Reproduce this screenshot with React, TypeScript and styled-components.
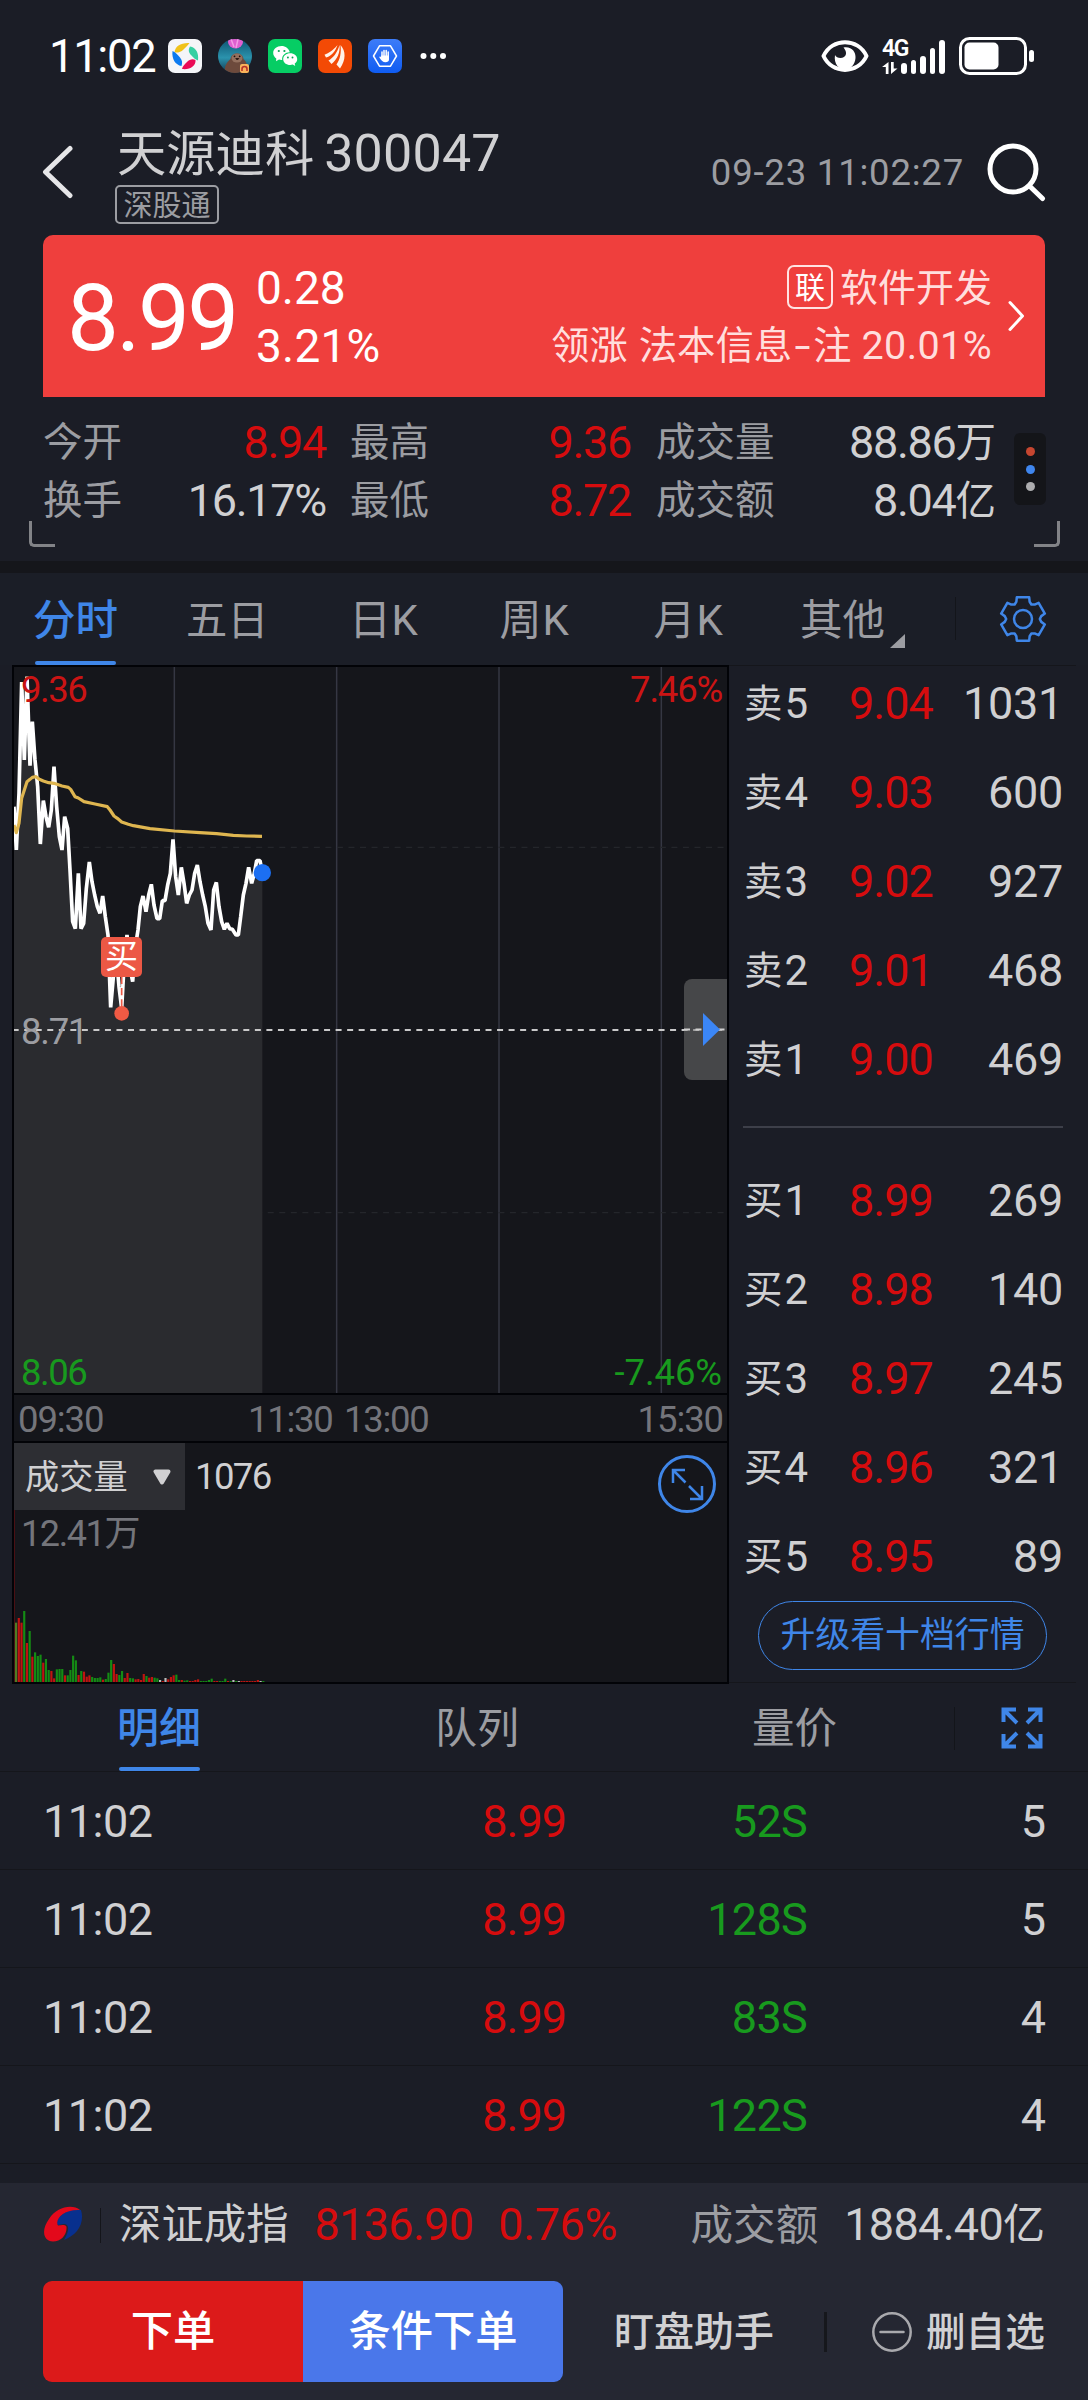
import React from "react";
import styled, { createGlobalStyle, css } from "styled-components";

const c = {
  page: "#1b1d26",
  tabs: "#1b1e27",
  ink: "#d0d0d2",
  gray: "#9c9da2",
  dim: "#74757b",
  red: "#d60c0e",
  green: "#189a1e",
  blue: "#3f86e8",
  line: "#15161b",
  plot: "#15161b",
  black: "#020307",
  bar: "#252732",
};

const Global = createGlobalStyle`
  *, *::before, *::after { box-sizing: border-box; }
  html, body { margin: 0; padding: 0; background: ${c.page}; }
  body { font-family: Roboto, "Noto Sans CJK SC", sans-serif; color: ${c.ink}; }
  svg { display: block; flex: none; }
`;

const Screen = styled.div`
  width: 1088px;
  height: 2400px;
  overflow: hidden;
  display: flex;
  flex-direction: column;
  background: ${c.page};
`;

interface TextProps {
  $size: number;
  $color?: string;
  $track?: number;
  $weight?: number;
}
const Text = styled.span<TextProps>`
  font-size: ${(p) => p.$size}px;
  line-height: 50px;
  white-space: pre;
  color: ${(p) => p.$color ?? c.ink};
  letter-spacing: ${(p) => p.$track ?? 0}px;
  font-weight: ${(p) => p.$weight ?? 400};
`;

/* ---------- status bar ---------- */
const StatusBar = styled.div`
  height: 112px;
  padding: 0 54px 0 49px;
  display: flex;
  align-items: center;
  justify-content: space-between;
`;
const StatusLeft = styled.div`
  display: flex;
  align-items: center;
  gap: 16px;
`;
const Clock = styled(Text)`
  width: 103px;
  padding-top: 2px;
  color: #fff;
`;
const StatusRight = styled.div`
  display: flex;
  align-items: center;
  gap: 13px;
`;

const AppIcons = () => (
  <>
    <svg width="34" height="34" viewBox="0 0 34 34">
      <rect width="34" height="34" rx="7" fill="#f4f5f8" />
      <path d="M6.500 13.500C7 7 13 3.500 21.500 4C19.500 7 17 9 15.500 10.500C13 13 10.500 13.800 6.500 13.500Z" fill="#f0c21a" />
      <path d="M22 7.500C28 8.500 31 14 30 21.500C27 20.500 25.500 18.500 23.500 16.500C20.500 13.500 20 11 22 7.500Z" fill="#36cfa2" />
      <path d="M27.500 21C28 27 22 31 14 30C14.500 27 17 25 19 23C21.500 20.500 24.500 19.500 27.500 21Z" fill="#ea0a56" />
      <path d="M4.500 12C8 13.500 10 16 12 18.500C14.500 21.500 14.500 24 13.500 27C7.500 26 3.500 20 4.500 12Z" fill="#0b7af0" />
    </svg>
    <svg width="34" height="34" viewBox="0 0 34 34">
      <defs>
        <linearGradient id="sea" x1="0" y1="0" x2="0" y2="1">
          <stop offset="0" stopColor="#0d5270" />
          <stop offset=".55" stopColor="#2b93ad" />
          <stop offset="1" stopColor="#123850" />
        </linearGradient>
        <clipPath id="round"><circle cx="17" cy="17" r="17" /></clipPath>
      </defs>
      <g clipPath="url(#round)">
        <rect width="34" height="34" fill="url(#sea)" />
        <ellipse cx="17.500" cy="3" rx="7.500" ry="6.500" fill="#df5fd0" />
        <path d="M13 0L16 8M20 0L18 9" stroke="#f39be6" strokeWidth="1.500" />
        <path d="M7 34C6 27 9 23 12.500 20C13 12.500 25 12.500 25.500 20C29 23 30 28 29 34Z" fill="#6d4a3c" />
        <ellipse cx="19" cy="19" rx="5.500" ry="4.500" fill="#93705e" />
        <path d="M17.800 19.500H20.800L19.300 21Z" fill="#2c1b16" stroke="#2c1b16" />
        <circle cx="16.500" cy="17.300" r=".9" fill="#1c110e" />
        <circle cx="21.700" cy="17.300" r=".9" fill="#1c110e" />
      </g>
      <rect x="22" y="25" width="9" height="9" rx="2" fill="#f9b35a" />
      <path d="M24 32V30A2.500 2.500 0 0 1 29 30V32" fill="none" stroke="#b8322a" strokeWidth="1.600" />
    </svg>
    <svg width="34" height="34" viewBox="0 0 34 34">
      <rect width="34" height="34" rx="7" fill="#06cd64" />
      <path d="M13.500 7C8.800 7 5.200 10 5.200 14C5.200 16.300 6.500 18.200 8.300 19.500L8 22.300L11 20.600C12 20.900 13.300 21 14.200 20.900C13.700 16.500 17.500 13.200 21.800 13.300C21 9.500 17.500 7 13.500 7Z" fill="#fff" />
      <path d="M22.200 14.300C18.300 14.300 15.200 16.900 15.200 20.200C15.200 23.500 18.300 26 22.200 26C23.100 26 24 25.900 24.800 25.600L27.200 27L26.700 24.600C28.200 23.500 29.200 22 29.200 20.200C29.200 16.900 26.100 14.300 22.200 14.300Z" fill="#fff" />
      <g fill="#06a552">
        <circle cx="10.800" cy="12" r="1.100" /><circle cx="16.400" cy="12" r="1.100" />
        <circle cx="19.900" cy="18.500" r=".95" /><circle cx="24.500" cy="18.500" r=".95" />
      </g>
    </svg>
    <svg width="34" height="34" viewBox="0 0 34 34">
      <rect width="34" height="34" rx="7" fill="#f34a05" />
      <g fill="#fff3ea">
        <path d="M6.500 15.800C11 14 15 11.500 19.500 6C17.500 12.500 13 17.500 8 18.500Z" />
        <path d="M10.500 21.500C15 19 19.500 13.500 21.500 6C22.500 13 19 21 13.500 25Z" />
        <path d="M18.500 25.500C22 20.500 23.500 14 22.500 6C28 12 28 21 22 29.500Z" />
      </g>
    </svg>
    <svg width="34" height="34" viewBox="0 0 34 34">
      <defs>
        <linearGradient id="guard" x1="0" y1="0" x2="0" y2="1">
          <stop offset="0" stopColor="#3d7cf8" /><stop offset="1" stopColor="#0f5cf2" />
        </linearGradient>
      </defs>
      <rect width="34" height="34" rx="7" fill="url(#guard)" />
      <path d="M11.500 6.800H22.500L28.500 17L22.500 27.200H11.500L5.500 17Z" fill="none" stroke="#fff" strokeWidth="1.500" strokeLinejoin="round" />
      <path d="M14 18V13M16 17V11.500M18.200 17V11.500M20.200 18V13" stroke="#fff" strokeWidth="1.500" strokeLinecap="round" />
      <path d="M13.200 16.500H21V20.500C21 22.300 19.500 23.300 17.500 23.300C15 23.300 13.200 21.500 11.400 18.500C11.200 17.300 12.600 17.300 13.200 18.200Z" fill="#fff" />
    </svg>
    <svg width="30" height="34" viewBox="0 0 30 34" fill="#fff">
      <circle cx="5.500" cy="17" r="3" /><circle cx="15.300" cy="17" r="3" /><circle cx="25" cy="17" r="3" />
    </svg>
  </>
);

const Network = styled.div`
  display: grid;
  grid-template-columns: 19px 45px;
  height: 36px;
  align-items: end;
`;
const NetworkLeft = styled.div`
  display: flex;
  flex-direction: column;
  gap: 4px;
`;
const NetworkType = styled.span`
  font-size: 23px;
  line-height: 19px;
  font-weight: 600;
  letter-spacing: -1.500px;
  color: #fff;
  white-space: nowrap;
`;
const Bars = styled.div`
  display: flex;
  align-items: flex-end;
  gap: 4px;
`;
const SignalBar = styled.i<{ $h: number }>`
  width: 5.500px;
  height: ${(p) => p.$h}px;
  border-radius: 3px;
  background: #fff;
`;

const StatusIcons = () => (
  <StatusRight>
    <svg width="48" height="34" viewBox="0 0 48 34">
      <path d="M2.500 17C11 -1.500 37 -1.500 45.500 17C37 35.500 11 35.500 2.500 17Z" fill="none" stroke="#fff" strokeWidth="4" strokeLinejoin="round" />
      <path d="M22.500 8.500C30.500 7 35 13 34.500 19C34 26 29 30.500 24 30.500C18 30.500 12.500 25 14 16C15.500 20 24 20.500 25 15C25.300 12 24 10.500 22.500 8.500Z" fill="#fff" />
    </svg>
    <Network>
      <NetworkLeft>
        <NetworkType>4G</NetworkType>
        <svg width="16" height="12" viewBox="0 0 16 12" fill="#fff">
          <path d="M6.500 0V12H3.800V5H0Z" /><path d="M9 12V0H11.700V6.500H15.500Z" />
        </svg>
      </NetworkLeft>
      <Bars>
        {[11, 14, 18, 26, 34].map((h) => <SignalBar key={h} $h={h} />)}
      </Bars>
    </Network>
    <svg width="75" height="38" viewBox="0 0 75 38">
      <rect x="1.500" y="1.500" width="65" height="35" rx="9" fill="none" stroke="#fff" strokeWidth="3" />
      <rect x="5.500" y="5.500" width="34" height="27" rx="5" fill="#fff" />
      <rect x="70" y="13" width="5" height="12" rx="2.500" fill="#fff" />
    </svg>
  </StatusRight>
);

/* ---------- stock header ---------- */
const Header = styled.header`
  height: 123px;
  padding: 0 42px 0 42px;
  display: flex;
  align-items: flex-start;
`;
const BackIcon = styled.svg`
  margin: 33px 41px 0 0;
`;
const Names = styled.div`
  flex: 1;
  padding: 17px 0 0 0;
  display: flex;
  flex-direction: column;
  align-items: flex-start;
  line-height: 0;
`;
const NameLine = styled.div`
  display: flex;
  gap: 10px;
  padding-left: 2px;
`;
const Tag = styled.span`
  margin-top: 6px;
  width: 104px;
  height: 39px;
  border: 2px solid ${c.gray};
  border-radius: 5px;
  display: flex;
  align-items: center;
  justify-content: center;
  font-size: 29px;
  line-height: 35px;
  padding-top: 3px;
  color: ${c.gray};
`;
const Stamp = styled(Text)`
  margin: 36px 22px 0 0;
`;
const SearchIcon = styled.svg`
  margin-top: 29px;
`;

const Quote = styled.section`
  height: 162px;
  margin: 0 43px;
  padding: 0 20px 0 24px;
  border-radius: 10px 10px 0 0;
  background: #ef3f3d;
  display: flex;
  align-items: center;
`;
const LastPrice = styled.div`
  width: 189px;
  font-size: 92.500px;
  line-height: 100px;
  letter-spacing: -2.700px;
  color: #fff;
  padding-top: 6px;
`;
const Pair = styled.div<{ $right?: boolean }>`
  display: flex;
  flex-direction: column;
  gap: 8px;
  padding-top: 2px;
  ${(p) => p.$right && css`
    flex: 1;
    align-items: flex-end;
    margin-right: 15px;
  `}
`;
const Sector = styled.div`
  display: flex;
  align-items: center;
  gap: 7px;
`;
const LinkBadge = styled.span`
  width: 46px;
  height: 44px;
  margin-top: -2px;
  border: 2px solid #ffe3e2;
  border-radius: 7px;
  text-align: center;
  font-size: 30px;
  line-height: 42px;
  color: #fff;
`;
const Mixed = styled.div`
  display: flex;
`;
const Leader = styled.div`
  display: flex;
  & > :nth-child(1) { margin-right: 11px; }
  & > :nth-child(4) { margin-right: 10px; }
`;
const Dash = styled(Text)`
  width: 21px;
  text-align: center;
  transform: scaleX(1.5);
`;

const Stats = styled.section`
  height: 164px;
  padding: 21px 29px 0;
  display: grid;
  grid-template-columns: 14px 952px 19px 32px 14px;
  grid-template-rows: 115px 27px;
`;
const StatGrid = styled.div`
  grid-column: 2;
  display: grid;
  grid-template-columns: 283px 24px 281px 25px 340px;
  grid-template-rows: 50px 50px;
  row-gap: 8px;
`;
const Stat = styled.div<{ $col: number }>`
  grid-column: ${(p) => p.$col};
  display: flex;
  justify-content: space-between;
`;
const Dots = styled.div`
  grid-column: 4;
  margin-top: 15px;
  height: 72px;
  border-radius: 6px;
  background: #141519;
  display: flex;
  flex-direction: column;
  align-items: center;
  justify-content: center;
  gap: 8.300px;
`;
const Dot = styled.i<{ $c: string }>`
  width: 9px;
  height: 9px;
  border-radius: 50%;
  background: ${(p) => p.$c};
`;
const Corner = styled.i<{ $side: "left" | "right" }>`
  grid-row: 2;
  grid-column: ${(p) => (p.$side === "left" ? "1 / 3" : "4 / 6")};
  justify-self: ${(p) => (p.$side === "left" ? "start" : "end")};
  align-self: start;
  margin-top: -12px;
  width: 26px;
  height: 26px;
  border-bottom: 3px solid #828387;
  ${(p) => (p.$side === "left" ? "border-left: 3px solid #828387; border-bottom-left-radius: 5px;" : "border-right: 3px solid #828387; border-bottom-right-radius: 5px;")}
`;
const Band = styled.div`
  height: 12px;
  background: ${c.line};
`;

interface StatItem { col: number; label: string; num: string; unit?: string; up?: boolean }
const stats: StatItem[] = [
  { col: 1, label: "今开", num: "8.94", up: true },
  { col: 3, label: "最高", num: "9.36", up: true },
  { col: 5, label: "成交量", num: "88.86", unit: "万" },
  { col: 1, label: "换手", num: "16.17%" },
  { col: 3, label: "最低", num: "8.72", up: true },
  { col: 5, label: "成交额", num: "8.04", unit: "亿" },
];

/* ---------- period tabs ---------- */
const PeriodTabs = styled.nav`
  height: 92px;
  background: ${c.tabs};
  display: flex;
  padding-left: 33px;
`;
const Period = styled.div<{ $w: number }>`
  width: ${(p) => p.$w}px;
  height: 92px;
  display: flex;
  padding-top: 23px;
`;
const Underlined = styled.div<{ $on?: boolean }>`
  display: flex;
  flex-direction: column;
  justify-content: space-between;
  align-items: center;
  height: 100%;
  &::after {
    content: "";
    width: 81px;
    height: 4px;
    border-radius: 2px;
    background: ${(p) => (p.$on ? c.blue : "transparent")};
  }
`;
const Caret = styled.i`
  align-self: flex-start;
  margin: 38px 0 0 5px;
  border-left: 15px solid transparent;
  border-bottom: 14px solid ${c.gray};
`;
const Split = styled.i<{ $top: number }>`
  width: 1px;
  height: 43px;
  margin-top: ${(p) => p.$top}px;
  background: #13151a;
`;
const GearIcon = styled.svg`
  margin: 22px 0 0 43px;
`;

const gearPath = (() => {
  const pts: string[] = [];
  const at = (deg: number, r: number) => {
    const a = (deg * Math.PI) / 180;
    return `${(24 + r * Math.sin(a)).toFixed(2)} ${(24 - r * Math.cos(a)).toFixed(2)}`;
  };
  for (let k = 0; k < 6; k++) {
    const b = k * 60;
    pts.push(at(b - 16, 22.5), at(b + 16, 22.5), at(b + 21, 18.5), at(b + 30, 16.8), at(b + 39, 18.5));
  }
  return `M${pts.join("L")}Z`;
})();

/* ---------- market area ---------- */
const Market = styled.div`
  display: flex;
  height: 1019px;
  border-bottom: 1px solid transparent;
`;
const Charts = styled.div`
  width: 717px;
  margin-left: 12px;
  display: flex;
  flex-direction: column;
`;
const PricePanel = styled.div`
  position: relative;
  height: 730px;
  border: 2px solid ${c.black};
  background: ${c.plot};
`;
const PlotLabel = styled(Text)<{ $top: number; $right?: boolean }>`
  position: absolute;
  top: ${(p) => p.$top}px;
  ${(p) => (p.$right ? "right: 5px;" : "left: 7px;")}
  line-height: 40px;
`;
const BuyMark = styled.span`
  position: absolute;
  left: 87px;
  top: 270px;
  width: 41px;
  height: 40px;
  border-radius: 5px;
  background: #ec5845;
  color: #fff;
  font-size: 33px;
  line-height: 40px;
  text-align: center;
`;
const Drawer = styled.div`
  position: absolute;
  right: 0;
  top: 312px;
  width: 43px;
  height: 101px;
  border-radius: 8px 0 0 8px;
  background: rgba(120, 120, 120, 0.5);
`;
const TimeAxis = styled.div`
  height: 46px;
  border: solid ${c.black};
  border-width: 0 2px;
  background: ${c.plot};
  display: grid;
  grid-template-columns: 230px 96px 1fr auto;
  padding: 0 4px 0 4px;
  align-items: center;
`;
const VolumePanel = styled.div`
  height: 243px;
  border: 2px solid ${c.black};
  background: ${c.plot};
  display: flex;
  flex-direction: column;
`;
const VolumeHead = styled.div`
  height: 67px;
  display: flex;
  align-items: flex-start;
`;
const Indicator = styled.div`
  width: 171px;
  height: 67px;
  padding: 1px 14px 0 11px;
  background: #2d2e33;
  display: flex;
  align-items: center;
  justify-content: space-between;
`;
const VolumeNow = styled(Text)`
  flex: 1;
  padding-left: 10px;
  line-height: 67px;
`;
const ExpandButton = styled.svg`
  margin: 10px 9px 0 0;
`;
const VolumePlot = styled.div`
  position: relative;
  flex: 1;
`;

const price: [number, number][] = [
  [42, 740], [49, 870], [57, 700], [65, 366], [73, 600], [81, 350], [90, 617], [97, 485], [105, 600], [113, 680],
  [121, 852], [130, 722], [138, 770], [146, 802], [154, 750], [162, 620], [170, 740], [178, 830], [186, 870], [194, 770],
  [203, 805], [210, 930], [218, 1085], [226, 1106], [235, 940], [243, 1106], [251, 1090], [259, 985], [268, 906], [276, 965],
  [284, 1005], [292, 1040], [300, 1060], [308, 1008], [316, 1070], [324, 1125], [332, 1342], [341, 1240], [349, 1180], [357, 1280],
  [365, 1345], [373, 1200], [381, 1125], [389, 1220], [398, 1265], [406, 1160], [414, 1110], [421, 1040], [429, 1008], [438, 1055],
  [446, 1005], [454, 973], [462, 1035], [471, 1076], [479, 1076], [487, 1022], [495, 1022], [503, 975], [511, 940], [519, 838],
  [527, 950], [535, 1005], [544, 922], [552, 970], [560, 1030], [568, 1005], [576, 990], [584, 940], [592, 915], [600, 965],
  [608, 1005], [616, 1040], [624, 1090], [633, 1110], [641, 990], [649, 967], [657, 1040], [665, 1085], [673, 1108], [681, 1090],
  [689, 1106], [697, 1108], [708, 1125], [715, 1125], [722, 1070], [730, 1005], [738, 970], [746, 922], [755, 970], [763, 940],
  [770, 902], [780, 902], [787, 938],
];
const average =
  "42,795 49,818 57,790 65,715 73,690 81,665 90,658 97,652 108,650 118,658 130,663 146,668 162,670 186,678 205,682 212,688 225,710 235,714 252,725 285,732 322,740 330,750 342,768 352,775 365,786 385,793 400,797 450,806 523,813 600,818 650,821 700,826 740,828 786,829";
const priceLine = price.map((p) => p.join(",")).join(" ");

const volumes =
  "178o192r178r213g117r153g76r89g78g82g58r69g36g33r11r38g39g39g20r20g36g79g65g21r33g31r16r20r15g12g12g14g7r9g28g66g54r24r21g33g12r27r12g11g8r9r6r24r18g13r15r13g11g6w3r12w8r15r20r22g6g6r4g5g3r3r6r8r3g3g3g6g10g3r3r3g3g10g3r3g6w3g3w3r3r3r3r3r3r6r3w3g";
const volumeBars = Array.from(volumes.matchAll(/(\d+)([a-z])/g)).map((m) => ({ h: Number(m[1]), k: m[2] }));
const barColor: Record<string, string> = { r: "#c01410", g: "#148c14", o: "#4f7d24", w: "#b9b9b9" };

const PriceChart = () => (
  <svg width="713" height="726" viewBox="42 321 2139 2178">
    {[523, 1010, 1497, 1984].map((x) => (
      <path key={x} d={`M${x} 321V2499`} stroke="#353743" strokeWidth="4.500" />
    ))}
    {[862, 1958].map((y) => (
      <path key={y} d={`M42 ${y}H2181`} stroke="#24262b" strokeWidth="4" strokeDasharray="18 16.600" />
    ))}
    <polygon points={`42,2499 ${priceLine} 787,2499`} fill="#2a2b2f" />
    <path d="M38 1410H2181" stroke="#c9c9ca" strokeWidth="6" strokeDasharray="18 16.600" />
    <polyline points={priceLine} fill="none" stroke="#fff" strokeWidth="11" strokeLinejoin="bevel" />
    <polyline points={average} fill="none" stroke="#dfb650" strokeWidth="9.500" strokeLinejoin="round" />
    <path d="M365 1250V1340" stroke="#ec5845" strokeWidth="5" strokeDasharray="22 12" />
    <circle cx="365" cy="1360" r="22" fill="#f05a44" />
    <circle cx="787" cy="938" r="26" fill="#1c6ff2" />
  </svg>
);

/* ---------- order book ---------- */
const Book = styled.aside`
  flex: 1;
  margin-right: 12px;
  padding: 13px 13px 0 14px;
  border-top: 1px solid ${c.line};
  border-bottom: 1px solid ${c.line};
`;
const Levels = styled.div`
  display: flex;
  flex-direction: column;
  gap: 39px;
`;
const Level = styled.div`
  display: grid;
  grid-template-columns: 106px 95px 1fr;
`;
const LevelName = styled.span`
  display: flex;
  gap: 2px;
  padding-left: 1px;
`;
const Qty = styled(Text)`
  text-align: right;
`;
const BookRule = styled.hr`
  border: 0;
  height: 2px;
  margin: 41px 0 48px;
  background: #3d3f49;
`;
const Upgrade = styled.button`
  display: block;
  width: 289px;
  height: 69px;
  margin: 19px 0 0 15px;
  padding: 0;
  border: 1.500px solid ${c.blue};
  border-radius: 35px;
  background: none;
  font: 400 34.900px/50px Roboto, "Noto Sans CJK SC", sans-serif;
  color: ${c.blue};
`;

const asks: [string, string, string][] = [
  ["5", "9.04", "1031"], ["4", "9.03", "600"], ["3", "9.02", "927"], ["2", "9.01", "468"], ["1", "9.00", "469"],
];
const bids: [string, string, string][] = [
  ["1", "8.99", "269"], ["2", "8.98", "140"], ["3", "8.97", "245"], ["4", "8.96", "321"], ["5", "8.95", "89"],
];
const LevelList = ({ side, rows }: { side: string; rows: [string, string, string][] }) => (
  <Levels>
    {rows.map(([n, p, q]) => (
      <Level key={n}>
        <LevelName>
          <Text $size={38.5}>{side}</Text>
          <Text $size={42}>{n}</Text>
        </LevelName>
        <Text $size={45} $color={c.red} $track={-1}>{p}</Text>
        <Qty $size={45} $track={-0.3}>{q}</Qty>
      </Level>
    ))}
  </Levels>
);

/* ---------- trade details ---------- */
const DetailTabs = styled.nav`
  height: 88px;
  display: flex;
  padding: 0 0 0 117px;
  border-bottom: 1px solid ${c.line};
`;
const DetailTab = styled.div<{ $w: number }>`
  width: ${(p) => p.$w}px;
  padding-top: 20px;
  display: flex;
`;
const FullIcon = styled.svg`
  margin: 22px 0 0 45px;
`;
const Trade = styled.div`
  height: 98px;
  padding: 2px 42px 0 43px;
  display: grid;
  grid-template-columns: 200px 323px 241px 1fr;
  align-items: center;
  border-bottom: 1px solid ${c.line};
`;
const TradeCell = styled(Text)`
  text-align: right;
`;
const Rest = styled.div`
  height: 19px;
`;

/* ---------- bottom bar ---------- */
const Bottom = styled.footer`
  flex: 1;
  background: ${c.bar};
  padding: 0 43px;
`;
const IndexRow = styled.div`
  height: 82px;
  padding-top: 2px;
  display: flex;
  align-items: center;
  & > svg { margin-top: -2px; }
`;
const IndexSplit = styled.i`
  width: 1px;
  height: 35px;
  margin: 0 18px 0 17px;
  background: #14151a;
`;
const Spacer = styled.i<{ $w?: number }>`
  ${(p) => (p.$w ? `width: ${p.$w}px;` : "flex: 1;")}
`;
const Actions = styled.div`
  margin-top: 16px;
  height: 101px;
  display: flex;
  align-items: center;
`;
const Order = styled.button<{ $tone: "red" | "blue" }>`
  width: 260px;
  height: 101px;
  border: 0;
  padding: 0;
  color: #fff;
  font: 500 42.300px/100px Roboto, "Noto Sans CJK SC", sans-serif;
  ${(p) => (p.$tone === "red" ? "background: #dc1a1a; border-radius: 9px 0 0 9px;" : "background: #4a77ea; border-radius: 0 9px 9px 0;")}
`;
const Action = styled(Text)`
  padding-top: 3px;
`;
const ActionSplit = styled.i`
  width: 3px;
  height: 40px;
  margin: 0 45px 0 50px;
  background: #16171c;
`;

export default function App() {
  return (
    <Screen>
      <Global />
      <StatusBar>
        <StatusLeft>
          <Clock $size={45.3} $track={-1.3}>11:02</Clock>
          <AppIcons />
        </StatusLeft>
        <StatusIcons />
      </StatusBar>

      <Header>
        <BackIcon width="32" height="54" viewBox="0 0 32 54">
          <path d="M28 3.500L3.500 27L28 50.500" fill="none" stroke="#e6e6e8" strokeWidth="5" strokeLinecap="round" strokeLinejoin="round" />
        </BackIcon>
        <Names>
          <NameLine>
            <Text $size={49.3}>天源迪科</Text>
            <Text $size={52} $track={0.2}>300047</Text>
          </NameLine>
          <Tag>深股通</Tag>
        </Names>
        <Stamp $size={36.5} $color={c.gray} $track={0.8}>09-23 11:02:27</Stamp>
        <SearchIcon width="60" height="62" viewBox="0 0 60 62">
          <circle cx="27" cy="28" r="23" fill="none" stroke="#fff" strokeWidth="5" />
          <path d="M43.500 45L56.500 57.500" stroke="#fff" strokeWidth="5" strokeLinecap="round" />
        </SearchIcon>
      </Header>

      <Quote>
        <LastPrice>8.99</LastPrice>
        <Pair>
          <Text $size={46} $color="#fff">0.28</Text>
          <Text $size={46} $color="#fff" $track={0.2}>3.21%</Text>
        </Pair>
        <Pair $right>
          <Sector>
            <LinkBadge>联</LinkBadge>
            <Text $size={38} $color="#ffdedd">软件开发</Text>
          </Sector>
          <Leader>
            <Text $size={38.2} $color="#ffdedd">领涨</Text>
            <Text $size={38.4} $color="#ffdedd">法本信息</Text>
            <Dash $size={38.5} $color="#ffdedd">-</Dash>
            <Text $size={38.2} $color="#ffdedd">注</Text>
            <Text $size={39.5} $color="#ffdedd" $track={0.4}>20.01%</Text>
          </Leader>
        </Pair>
        <svg width="18" height="32" viewBox="0 0 18 32">
          <path d="M3 2.500L15.500 16L3 29.500" fill="none" stroke="#fff" strokeWidth="3" strokeLinecap="round" strokeLinejoin="round" />
        </svg>
      </Quote>

      <Stats>
        <StatGrid>
          {stats.map((s) => (
            <Stat key={s.label} $col={s.col}>
              <Text $size={39.5} $color={c.gray}>{s.label}</Text>
              <Mixed>
                <Text $size={45} $color={s.up ? c.red : c.ink} $track={-1.3}>{s.num}</Text>
                {s.unit && <Text $size={40.5}>{s.unit}</Text>}
              </Mixed>
            </Stat>
          ))}
        </StatGrid>
        <Dots>
          <Dot $c="#c64630" />
          <Dot $c="#3f86ee" />
          <Dot $c="#adadaf" />
        </Dots>
        <Corner $side="left" />
        <Corner $side="right" />
      </Stats>
      <Band />

      <PeriodTabs>
        <Period $w={153}>
          <Underlined $on><Text $size={42.5} $color={c.blue} $weight={500}>分时</Text></Underlined>
        </Period>
        <Period $w={163}><Text $size={41.3} $color={c.gray}>五日</Text></Period>
        <Period $w={150.5}><Text $size={42} $color={c.gray} $track={0.5}>日K</Text></Period>
        <Period $w={154}><Text $size={42} $color={c.gray} $track={0.9}>周K</Text></Period>
        <Period $w={146.5}><Text $size={42} $color={c.gray} $track={0.9}>月K</Text></Period>
        <Period $w={155}><Text $size={42.5} $color={c.gray}>其他</Text><Caret /></Period>
        <Split $top={24} />
        <GearIcon width="48" height="48" viewBox="0 0 48 48" fill="none" stroke={c.blue} strokeWidth="2.500" strokeLinejoin="round">
          <path d={gearPath} />
          <circle cx="24" cy="24" r="9" />
        </GearIcon>
      </PeriodTabs>

      <Market>
        <Charts>
          <PricePanel>
            <PlotLabel $size={36.5} $color="#cb1414" $track={-1.5} $top={3}>9.36</PlotLabel>
            <PlotLabel $size={36.5} $color="#cb1414" $track={-1.2} $top={3} $right>7.46%</PlotLabel>
            <PriceChart />
            <PlotLabel $size={36.5} $color={c.gray} $track={-1.2} $top={345}>8.71</PlotLabel>
            <PlotLabel $size={36.5} $color={c.green} $track={-1.5} $top={686}>8.06</PlotLabel>
            <PlotLabel $size={36.5} $color={c.green} $track={-0.1} $top={686} $right>-7.46%</PlotLabel>
            <BuyMark>买</BuyMark>
            <Drawer>
              <svg width="43" height="101" viewBox="0 0 43 101">
                <path d="M0 50.500H43" stroke="#d0d0d0" strokeWidth="2" strokeDasharray="6 5.500" />
                <path d="M19 34L36 50.500L19 67Z" fill="#3b86f6" />
              </svg>
            </Drawer>
          </PricePanel>
          <TimeAxis>
            <Text $size={36.5} $color={c.dim} $track={-1.1}>09:30</Text>
            <Text $size={36.5} $color={c.dim} $track={-1.3}>11:30</Text>
            <Text $size={36.5} $color={c.dim} $track={-1.3}>13:00</Text>
            <Text $size={36.5} $color={c.dim} $track={-1.1}>15:30</Text>
          </TimeAxis>
          <VolumePanel>
            <VolumeHead>
              <Indicator>
                <Text $size={34.2}>成交量</Text>
                <svg width="18" height="16" viewBox="0 0 18 16">
                  <path d="M2.500 2.500H15.500L9 13.500Z" fill={c.ink} stroke={c.ink} strokeWidth="4" strokeLinejoin="round" />
                </svg>
              </Indicator>
              <VolumeNow $size={36.5} $track={-1.6}>1076</VolumeNow>
              <ExpandButton width="62" height="62" viewBox="0 0 62 62" fill="none" stroke={c.blue} strokeWidth="3">
                <circle cx="31" cy="31" r="27.500" />
                <path d="M17 30V17H29M17.500 17.500L29.500 29.500M33 33L45.500 45.500M34 46H46V33" strokeWidth="2.500" />
              </ExpandButton>
            </VolumeHead>
            <VolumePlot>
              <PlotLabel $size={36} $color={c.dim} $track={-1.4} $top={4}>12.41万</PlotLabel>
              <svg width="713" height="172" viewBox="42 270 2139 516">
                <path d="M43.500 270V786" stroke="#4a1014" strokeWidth="3" />
                {volumeBars.map((b, i) => (
                  <rect key={i} x={45 + i * 8.15} y={786 - b.h} width="6.500" height={b.h} fill={barColor[b.k]} />
                ))}
              </svg>
            </VolumePlot>
          </VolumePanel>
        </Charts>
        <Book>
          <LevelList side="卖" rows={asks} />
          <BookRule />
          <LevelList side="买" rows={bids} />
          <Upgrade>升级看十档行情</Upgrade>
        </Book>
      </Market>

      <DetailTabs>
        <DetailTab $w={318}>
          <Underlined $on><Text $size={42} $color={c.blue} $weight={500}>明细</Text></Underlined>
        </DetailTab>
        <DetailTab $w={317}><Text $size={42} $color={c.gray}>队列</Text></DetailTab>
        <DetailTab $w={202}><Text $size={42.5} $color={c.gray}>量价</Text></DetailTab>
        <Split $top={23} />
        <FullIcon width="44" height="44" viewBox="0 0 44 44" fill="none" stroke={c.blue} strokeWidth="4">
          <path d="M3.500 16V3.500H16M4 4L17 17" />
          <path d="M28 3.500H40.500V16M40 4L27 17" />
          <path d="M3.500 28V40.500H16M4 40L17 27" />
          <path d="M28 40.500H40.500V28M40 40L27 27" />
        </FullIcon>
      </DetailTabs>
      {[["52S", "5"], ["128S", "5"], ["83S", "4"], ["122S", "4"]].map(([v, n]) => (
        <Trade key={v}>
          <Text $size={45} $track={-0.5}>11:02</Text>
          <TradeCell $size={45} $color={c.red} $track={-1}>8.99</TradeCell>
          <TradeCell $size={45} $color={c.green} $track={-0.7}>{v}</TradeCell>
          <TradeCell $size={45}>{n}</TradeCell>
        </Trade>
      ))}
      <Rest />

      <Bottom>
        <IndexRow>
          <svg width="40" height="36" viewBox="0 0 40 36">
            <path d="M38 4C25 1 12 12 14 18C15 20 18 18 21 18C27 18 26 26 21 34C34 29 42 18 38 4Z" fill="#08308e" />
            <path d="M37 4C30 -2 14 0 6 13C-2 24 0 35 10 35.500C18 35.500 24 29 23.500 21C23 18 18 19 15 19.500C11.500 14 20 3 37 4Z" fill="#e3091b" />
          </svg>
          <IndexSplit />
          <Text $size={42.4}>深证成指</Text>
          <Spacer $w={26} />
          <Text $size={45} $color={c.red} $track={-0.7}>8136.90</Text>
          <Spacer $w={25} />
          <Text $size={45} $color={c.red} $track={-0.4}>0.76%</Text>
          <Spacer />
          <Text $size={42.6} $color={c.gray}>成交额</Text>
          <Spacer $w={26} />
          <Text $size={45} $track={-0.7}>1884.40</Text>
          <Text $size={42}>亿</Text>
        </IndexRow>
        <Actions>
          <Order $tone="red">下单</Order>
          <Order $tone="blue">条件下单</Order>
          <Spacer $w={51} />
          <Action $size={40} $weight={500}>盯盘助手</Action>
          <ActionSplit />
          <svg width="40" height="40" viewBox="0 0 40 40" fill="none" stroke="#a9a9ad" strokeWidth="2.500">
            <circle cx="20" cy="20" r="18.700" />
            <path d="M8.500 20H31.500" strokeLinecap="round" />
          </svg>
          <Spacer />
          <Action $size={39.7} $weight={500}>删自选</Action>
        </Actions>
      </Bottom>
    </Screen>
  );
}
